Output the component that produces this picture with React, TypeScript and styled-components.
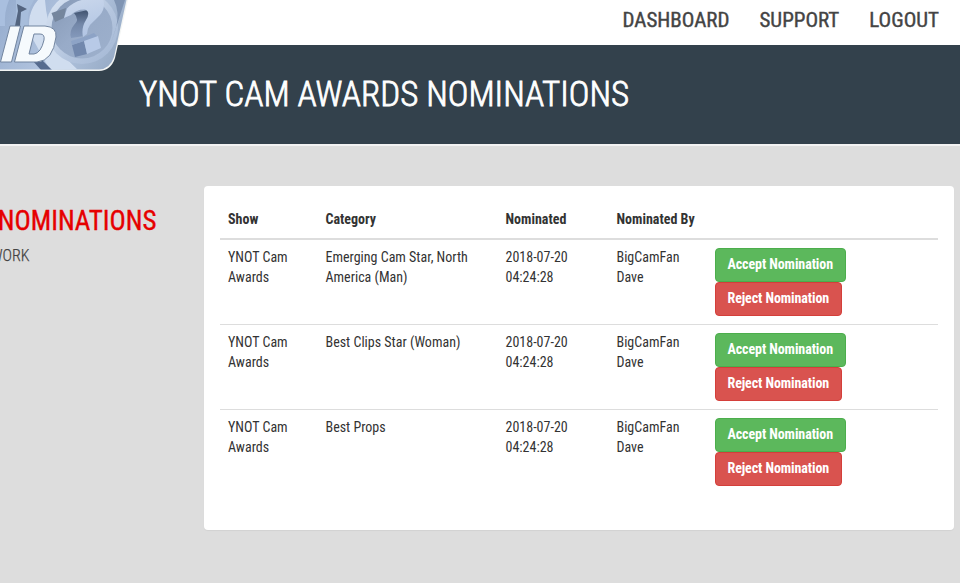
import React from "react";
import styled, { createGlobalStyle } from "styled-components";

const GlobalStyle = createGlobalStyle`
  *, *::before, *::after { box-sizing: border-box; }
  body {
    margin: 0;
    background: #ddd;
    color: #333;
    font: 14px/20px "Roboto Condensed", Roboto, sans-serif;
    overflow: hidden;
  }
`;

const Page = styled.div`
  height: 583px;
  overflow: hidden;
`;

const Header = styled.header`
  position: relative;
  height: 45px;
  background: #fff;
`;

const LogoArt = styled.svg`
  position: absolute;
  left: 0;
  top: 0;
  z-index: 1;
`;

const Nav = styled.nav`
  display: flex;
  justify-content: flex-end;
  gap: 30px;
  padding: 7px 21px 0 0;
`;

const NavLink = styled.a`
  color: #444;
  font-size: 21px;
  font-weight: 400;
  line-height: 26px;
  text-transform: uppercase;
  -webkit-text-stroke: 0.4px #444;
`;

const Banner = styled.div`
  height: 101px;
  padding: 30px 0 0 139px;
  background: #33414c;
  border-bottom: 2px solid #f2f2f2;
`;

const Title = styled.h1`
  margin: 0;
  color: #fff;
  font-size: 35px;
  font-weight: 300;
  line-height: 40px;
  text-transform: uppercase;
  -webkit-text-stroke: 0.8px #fff;
`;

const Content = styled.main`
  display: grid;
  grid-template-columns: 204px 750px;
  align-items: start;
  padding-top: 40px;
`;

const Sidebar = styled.aside`
  display: flex;
  flex-direction: column;
  align-items: flex-start;
  padding-top: 18px;
  text-transform: uppercase;
`;

const SideHeading = styled.h2`
  display: flex;
  justify-content: flex-end;
  width: 156.5px;
  margin: 0;
  color: #e60000;
  font-size: 27px;
  font-weight: 400;
  line-height: 34px;
  -webkit-text-stroke: 0.35px #e60000;
`;

const SideLink = styled.a`
  display: flex;
  justify-content: flex-end;
  width: 29.5px;
  margin-top: 8px;
  color: #444;
  font-size: 16px;
  font-weight: 300;
  line-height: 20px;
  -webkit-text-stroke: 0.25px #444;
`;

const Panel = styled.section`
  padding: 16px 16px 36px;
  background: #fff;
  border-radius: 4px;
  box-shadow: 0 1px 1px rgba(0, 0, 0, 0.05);
`;

const Table = styled.div`
  width: 718px;
`;

const Row = styled.div<{ $head?: boolean }>`
  display: grid;
  grid-template-columns: 97.5px 180px 111px 98.5px 1fr;
  font-weight: ${(p) => (p.$head ? 700 : 400)};
  border-bottom: ${(p) => (p.$head ? "2px" : "1px")} solid #ddd;

  &:last-child {
    border-bottom: 0;
  }
`;

const Cell = styled.div`
  padding: 7px 8px 9px;
`;

const Actions = styled.div`
  display: flex;
  flex-direction: column;
  align-items: flex-start;
  padding: 8px;
`;

const Button = styled.button<{ $danger?: boolean }>`
  height: 34px;
  padding: 0 12px 2px 11.5px;
  color: #fff;
  font: inherit;
  font-weight: 700;
  letter-spacing: -0.09px;
  white-space: nowrap;
  background: ${(p) => (p.$danger ? "#d9534f" : "#5cb85c")};
  border: 1px solid ${(p) => (p.$danger ? "#d43f3a" : "#4cae4c")};
  border-radius: 4px;
`;

const Logo = () => (
  <LogoArt width="130" height="72" viewBox="0 0 130 72">
    <defs>
      <clipPath id="badge">
        <path d="M0 0H126.500L114 57Q110 69 99 69.500H0Z" />
      </clipPath>
      <linearGradient id="disc" x1="0" y1="0" x2="1" y2="1">
        <stop offset="0" stopColor="#8598b5" />
        <stop offset="0.5" stopColor="#98abc8" />
        <stop offset="1" stopColor="#9db0cc" />
      </linearGradient>
      <linearGradient id="base" x1="0" y1="0" x2="1" y2="0.3">
        <stop offset="0" stopColor="#94abcd" />
        <stop offset="0.6" stopColor="#b4c6e0" />
        <stop offset="1" stopColor="#9aaec9" />
      </linearGradient>
      <linearGradient id="ring" x1="0" y1="0" x2="1" y2="1">
        <stop offset="0" stopColor="#dbe6f4" />
        <stop offset="0.6" stopColor="#b4c5de" />
        <stop offset="1" stopColor="#a3b7d4" />
      </linearGradient>
      <linearGradient id="mark" x1="0" y1="0" x2="0.3" y2="1">
        <stop offset="0" stopColor="#cbd8ec" />
        <stop offset="1" stopColor="#b3c6e4" />
      </linearGradient>
      <linearGradient id="stem" x1="0" y1="0" x2="0" y2="1">
        <stop offset="0" stopColor="#3f526f" />
        <stop offset="0.5" stopColor="#7387a8" />
        <stop offset="1" stopColor="#8499bb" />
      </linearGradient>
    </defs>
    <path d="M0 0H128L115 58Q111 70.500 99 71H0Z" fill="#f3f5f4" />
    <g clipPath="url(#badge)">
      <path d="M0 0H130V72H0Z" fill="url(#base)" />
      <path d="M0 0H9Q4 12 5 26H0Z" fill="#a9bfdf" />
      <path d="M16 0H34Q26 12 28 28H16Z" fill="#a7bddb" />
      <path d="M17 4L27 9L21 12L20 26H15L18 11Z" fill="#53647f" />
      <path d="M38 0Q26 14 30 34L50 70H78Q48 44 45 0Z" fill="#d0ddef" />
      <path d="M38 56L52 70H41L32 60Z" fill="#566b8e" />
      <circle cx="82" cy="28" r="36" fill="url(#ring)" />
      <circle cx="82" cy="28" r="30.500" fill="url(#disc)" />
      <path d="M114 0Q120 12 116 28L110 46L125 0Z" fill="#7f94b3" />
      <path d="M51.500 13L66 8L64 18L55 22Z" fill="#75869d" />
      <path d="M74 13L88 10L90 18L84 36L71 38Q69 31 74 25Q80 20 74 13Z" fill="url(#stem)" />
      <path d="M64 18L67 8.500Q75 0 88 -1H103Q106 8 100 15Q95 20 90 25Q87 29 87 34L83 37Q81 28 86 20Q91 12 85 9.500Q77 9 71 15Z" fill="url(#mark)" />
      <path d="M72 45L84 41L87 54L75 57Z" fill="#7288ad" />
      <path d="M71 41L84 37L94 33L98 37L84 41L72 45Z" fill="#8da3c6" />
      <path d="M84 41L98 36L101 48L87 54Z" fill="#b8cae7" />
    </g>
    <g stroke="#71849f" strokeWidth="1" fillRule="evenodd" fill="#f6fafd">
      <path d="M10 26H20.500L11.500 62H0.500Z" />
      <path d="M24 26H45Q57 27 56 37Q53 61 37 62H14.500ZM34 34L29 54H34Q41 53 44 40Q45 34 40 34Z" />
    </g>
  </LogoArt>
);

const categories = ["Emerging Cam Star, North America (Man)", "Best Clips Star (Woman)", "Best Props"];
const headings = ["Show", "Category", "Nominated", "Nominated By"];

export default function App() {
  return (
    <Page>
      <GlobalStyle />
      <Header>
        <Logo />
        <Nav>
          <NavLink>Dashboard</NavLink>
          <NavLink>Support</NavLink>
          <NavLink>Logout</NavLink>
        </Nav>
      </Header>
      <Banner>
        <Title>YNOT Cam Awards Nominations</Title>
      </Banner>
      <Content>
        <Sidebar>
          <SideHeading>Nominations</SideHeading>
          <SideLink>Work</SideLink>
        </Sidebar>
        <Panel>
          <Table>
            <Row $head>
              {headings.map((heading) => (
                <Cell key={heading}>{heading}</Cell>
              ))}
            </Row>
            {categories.map((category) => (
              <Row key={category}>
                <Cell>YNOT Cam Awards</Cell>
                <Cell>{category}</Cell>
                <Cell>2018-07-20 04:24:28</Cell>
                <Cell>BigCamFan Dave</Cell>
                <Actions>
                  <Button>Accept Nomination</Button>
                  <Button $danger>Reject Nomination</Button>
                </Actions>
              </Row>
            ))}
          </Table>
        </Panel>
      </Content>
    </Page>
  );
}
